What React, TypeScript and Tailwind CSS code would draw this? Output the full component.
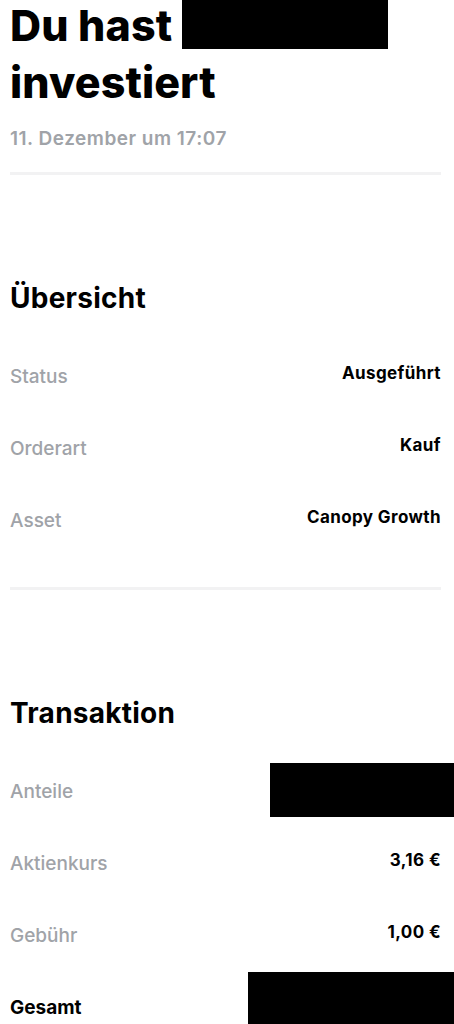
const font = "font-['Inter','Liberation_Sans',sans-serif]";

interface Row {
  label: string;
  value?: string;
  redacted?: boolean;
  strong?: boolean;
}

const overview: Row[] = [
  { label: "Status", value: "Ausgeführt" },
  { label: "Orderart", value: "Kauf" },
  { label: "Asset", value: "Canopy Growth" },
];

const transaction: Row[] = [
  { label: "Anteile", redacted: true },
  { label: "Aktienkurs", value: "3,16 €" },
  { label: "Gebühr", value: "1,00 €" },
  { label: "Gesamt", redacted: true, strong: true },
];

function Divider() {
  return <div className="h-[3px] w-full bg-[#f2f2f3]" />;
}

function DetailRow({ row, last }: { row: Row; last?: boolean }) {
  return (
    <div className="flex h-[72px] items-center justify-between">
      <span
        className={
          row.strong
            ? "text-[19px] font-bold text-black"
            : "text-[19px] font-medium text-[#a0a3a8]"
        }
      >
        {row.label}
      </span>
      {row.redacted ? (
        <span
          className={
            last
              ? "-mr-[13px] h-[72px] w-[206px] self-start bg-black"
              : "-mr-[13px] mb-[5px] h-[54px] w-[184px] bg-black"
          }
        />
      ) : (
        <span className="mb-[6px] text-[17px] font-bold tracking-[0.4px] text-black">
          {row.value}
        </span>
      )}
    </div>
  );
}

function Section({ title, rows }: { title: string; rows: Row[] }) {
  return (
    <section className="flex flex-col">
      <h2 className="text-[28px] leading-[32px] font-bold tracking-[0.25px] text-black">
        {title}
      </h2>
      <div className="mt-[27px] flex flex-col">
        {rows.map((r, i) => (
          <DetailRow key={r.label} row={r} last={i === rows.length - 1 && rows.length > 3} />
        ))}
      </div>
    </section>
  );
}

export default function App() {
  return (
    <div className={`${font} h-[1024px] overflow-hidden bg-white pr-[13px] pl-[10px] antialiased`}>
      <h1 className="-mt-[3px] text-[43px] leading-[57px] font-extrabold tracking-[0.1px] text-black">
        Du hast{" "}
        <span className="inline-block h-[52px] w-[206px] bg-black align-[-8px]" />
        <br />
        investiert
      </h1>
      <p className="mt-4 text-[19px] leading-6 font-semibold tracking-[0.5px] text-[#a0a3a8]">
        11. Dezember um 17:07
      </p>
      <div className="mt-[21px]">
        <Divider />
      </div>
      <div className="mt-[107px]">
        <Section title="Übersicht" rows={overview} />
      </div>
      <div className="mt-[30px]">
        <Divider />
      </div>
      <div className="mt-[107px]">
        <Section title="Transaktion" rows={transaction} />
      </div>
    </div>
  );
}
